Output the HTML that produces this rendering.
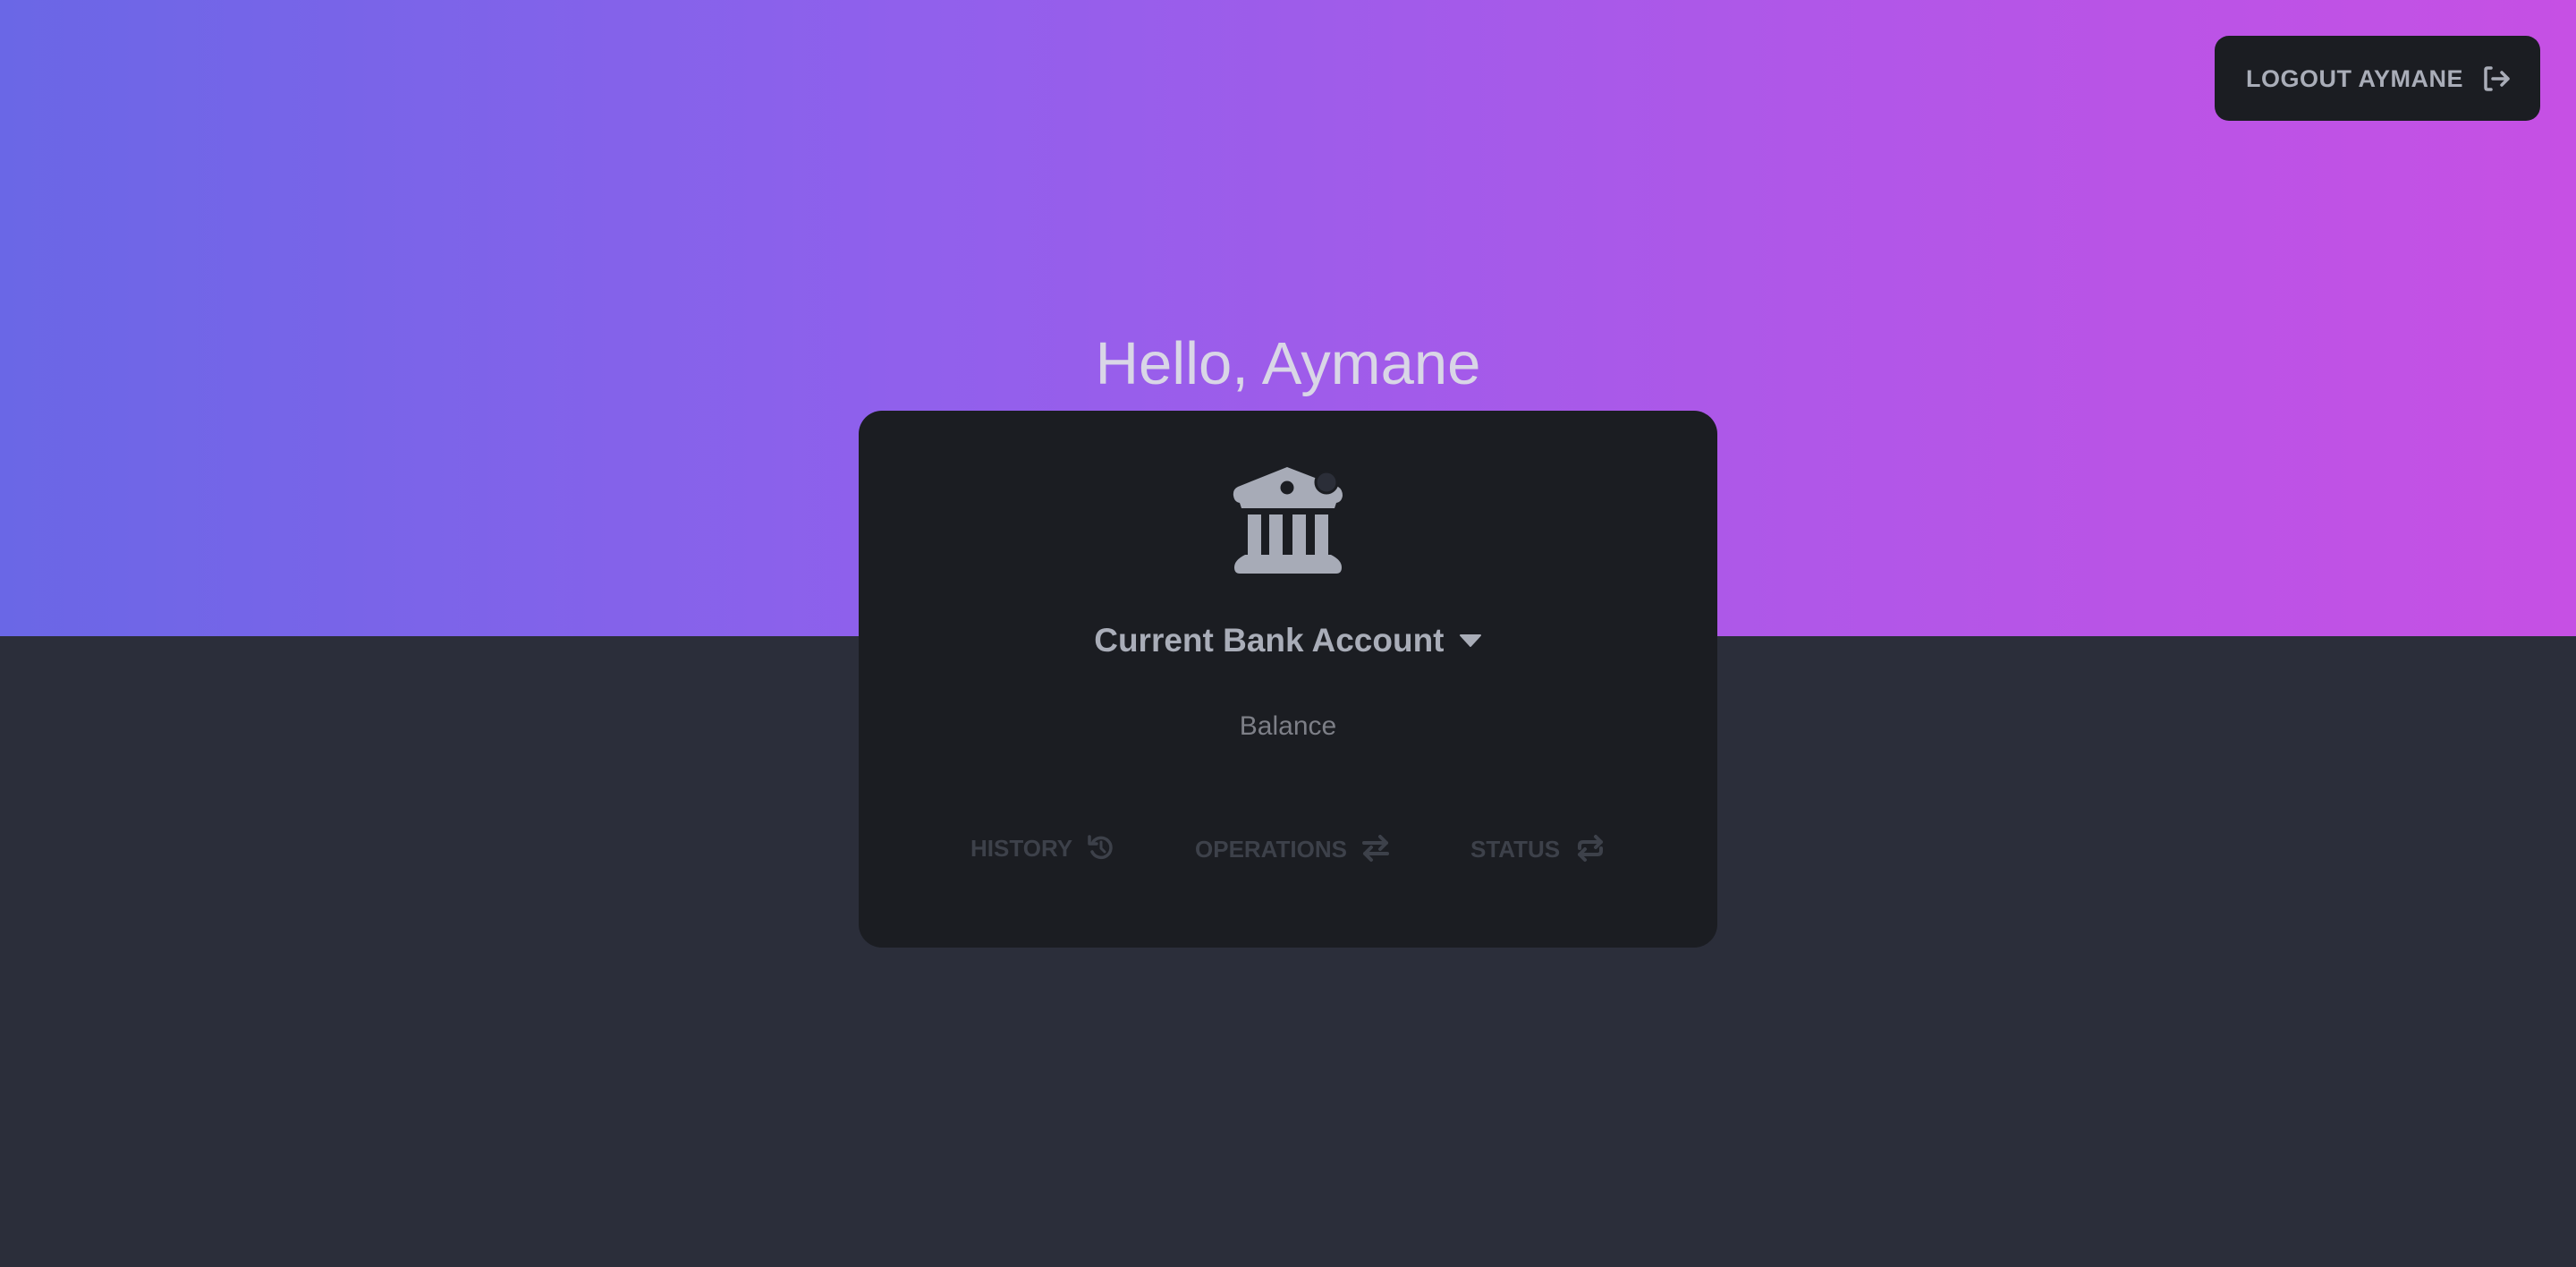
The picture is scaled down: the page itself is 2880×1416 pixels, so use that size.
<!DOCTYPE html>
<html><head><meta charset="utf-8"><style>
html,body{margin:0;padding:0;width:2880px;height:1416px;overflow:hidden;background:#2b2e3a;font-family:"Liberation Sans",sans-serif}
.top{position:absolute;left:0;top:0;width:2880px;height:711px;background:linear-gradient(90deg,#6a67e6 0%,#9060ec 35%,#b057e8 70%,#c650e4 100%)}
.btn{position:absolute;left:2476px;top:40px;width:364px;height:95px;background:#1b1d22;border-radius:16px;color:#a9adb8;font-size:27px;font-weight:bold;letter-spacing:0.5px}
.btn span{position:absolute;left:35px;top:33px}
.hello{position:absolute;left:0;width:2880px;top:362px;text-align:center;font-size:67px;color:#d9d6e6;line-height:90px}
.card{position:absolute;left:960px;top:459px;width:960px;height:600px;background:#1b1d22;border-radius:26px}
.t{position:absolute;left:0;width:2880px;text-align:center}
.acc{top:695px;font-size:37px;font-weight:bold;color:#a9adb8}
.bal{top:795px;font-size:30px;color:#7d7f87}
.tab{position:absolute;top:932px;font-size:26px;font-weight:bold;color:#3d414a}
</style></head><body>
<div class="top"></div>
<div class="btn"><span>LOGOUT AYMANE</span>
<svg style="position:absolute;left:300px;top:33px" width="32" height="30" viewBox="0 0 32 30"><path d="M9 3H5Q3 3 3 5V25Q3 27 5 27H9M11 15H28M21 8L28 15L21 22" fill="none" stroke="#a9adb8" stroke-width="3.5" stroke-linecap="round" stroke-linejoin="round"/></svg></div>
<div class="hello">Hello, Aymane</div>
<div class="card"></div>
<svg style="position:absolute;left:1370px;top:510px" width="140" height="140" viewBox="0 0 140 140">
<path d="M69 12L14 34Q8 37 9 44Q10 51 16 52L18 58H122L124 52Q130 51 131 44Q131 37 126 34Z" fill="#a7abb7"/>
<path d="M25 65H115V111H100V65H90V111H75V65H64V111H49V65H40V111H25Z" fill="#a7abb7"/>
<path d="M22 110H118Q130 116 130 124Q130 131 124 131H16Q10 131 10 124Q10 116 22 110Z" fill="#a7abb7"/>
<circle cx="69" cy="35" r="7.5" fill="#1b1d22"/>
<circle cx="113" cy="29" r="12" fill="#2b2e38" stroke="#1b1d22" stroke-width="3"/>
</svg>
<div class="t acc">Current Bank Account <svg width="26" height="16" viewBox="0 0 26 16" style="vertical-align:4px;margin-left:6px"><path d="M2 2H24L13 14Z" fill="#a9adb8" stroke="#a9adb8" stroke-width="2" stroke-linejoin="round"/></svg></div>
<div class="t bal">Balance</div>
<div class="tab" style="left:1085px">HISTORY <svg width="28" height="30" viewBox="0 0 28 30" style="vertical-align:-5px;margin-left:10px"><path d="M6 9A11 11 0 1 1 5 20" fill="none" stroke="#3d414a" stroke-width="3.5" stroke-linecap="round"/><path d="M2 3V11H10" fill="none" stroke="#3d414a" stroke-width="3.5" stroke-linecap="round" stroke-linejoin="round"/><path d="M15 9V16L19 20" fill="none" stroke="#3d414a" stroke-width="3" stroke-linecap="round"/></svg></div>
<div class="tab" style="left:1336px">OPERATIONS <svg width="30" height="32" viewBox="0 0 30 32" style="vertical-align:-6px;margin-left:10px"><path d="M2 10H27M20 3L27 10L20 17M28 22H3M10 15L3 22L10 29" fill="none" stroke="#3d414a" stroke-width="4" stroke-linecap="round" stroke-linejoin="round"/></svg></div>
<div class="tab" style="left:1644px">STATUS <svg width="30" height="32" viewBox="0 0 30 32" style="vertical-align:-6px;margin-left:12px"><path d="M3 16V13Q3 9 7 9H27M21 3L27 9L21 15M27 16V19Q27 23 23 23H3M9 17L3 23L9 29" fill="none" stroke="#3d414a" stroke-width="4" stroke-linecap="round" stroke-linejoin="round"/></svg></div>
</body></html>
